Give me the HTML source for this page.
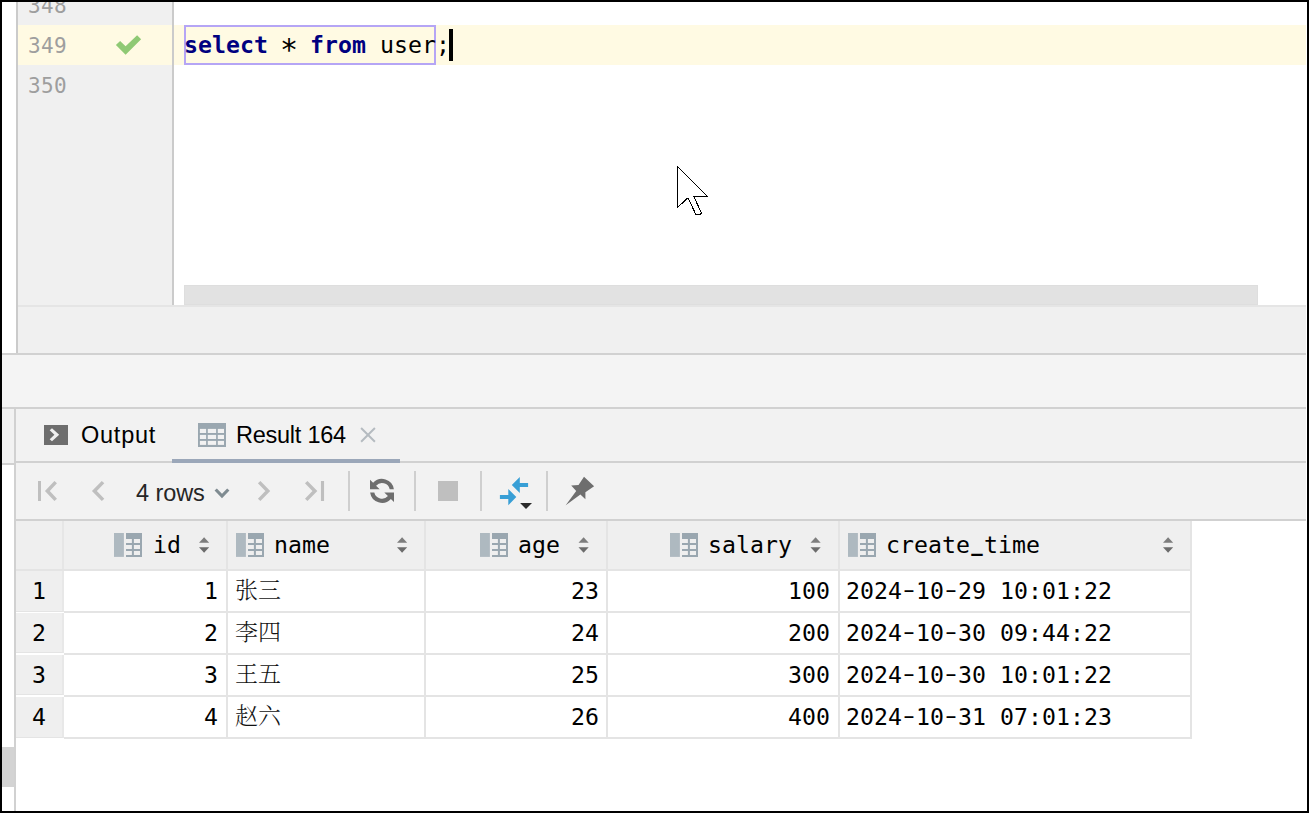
<!DOCTYPE html>
<html lang="zh">
<head>
<meta charset="utf-8">
<title>select * from user</title>
<style>
html,body{margin:0;padding:0;}
body{width:1309px;height:813px;position:relative;overflow:hidden;background:#fff;
  font-family:"Liberation Sans","Noto Sans CJK SC",sans-serif;}
.a{position:absolute;}
.mono{font-family:"DejaVu Sans Mono","Liberation Mono","Noto Sans CJK SC",monospace;}
.code{font-size:23.2px;line-height:40px;white-space:pre;color:#000;letter-spacing:0.034px;}
.star{display:inline-block;width:14px;font-size:30px;line-height:0;text-indent:-2px;position:relative;top:7px;letter-spacing:0;}
.ln{font-size:21px;line-height:40px;color:#9e9e9e;left:28px;white-space:pre;letter-spacing:0.3px;}
.kw{color:#000080;font-weight:bold;}
.ui{font-size:23.5px;line-height:30px;color:#000;white-space:pre;}
.sep{width:2px;height:40px;top:471px;background:#cfcfcf;}
.hl{background:#d1d1d1;}
.th{font-size:23.2px;line-height:48px;top:521px;white-space:pre;color:#000;letter-spacing:0.034px;}
.td{font-size:23.2px;line-height:40px;white-space:pre;color:#000;letter-spacing:0.034px;}
.num{text-align:right;}
.hy{display:inline-block;transform:translateY(-2px) scaleX(1.5);}
.us{display:inline-block;font-weight:bold;transform:translateY(-2.5px) scaleX(0.82);}
.cjk{font-family:"Liberation Serif","Noto Serif CJK SC",serif;font-size:23px;font-weight:300;color:#111;}
.vline{width:2px;top:521px;height:218px;background:#e4e4e4;}
.rowline{left:64px;width:1128px;height:2px;background:#e4e4e4;}
.rh{left:16px;width:46px;height:39px;background:#efefef;border-right:2px solid #e8e8e8;border-bottom:1px solid #e4e4e4;}
.rn{left:16px;width:46px;text-align:center;}
</style>
</head>
<body>

<!-- ===== editor ===== -->
<div class="a" style="left:16px;top:2px;width:2px;height:351px;background:#cbcbcb"></div>
<div class="a" style="left:18px;top:2px;width:154px;height:303px;background:#f0f0f0"></div>
<div class="a" style="left:18px;top:25px;width:1289px;height:40px;background:#fffae3"></div>
<div class="a" style="left:172px;top:2px;width:2px;height:303px;background:#cbcbcb"></div>

<div class="a mono ln" style="top:-14px">348</div>
<div class="a mono ln" style="top:26px">349</div>
<div class="a mono ln" style="top:66px">350</div>

<!-- check mark -->
<svg class="a" style="left:108px;top:28px" width="42" height="34" viewBox="108 28 42 34">
  <path d="M115.9 44.95 L120.1 40.9 L125.6 46.2 L137.1 35.3 L141.1 39.3 L125.6 54.8 Z" fill="#8fc974"/>
</svg>

<!-- statement frame -->
<div class="a" style="left:184px;top:25px;width:248px;height:36px;border:2px solid #b5a5f5"></div>
<div class="a mono code" style="left:184px;top:25px"><span class="kw">select</span> <span class="star">*</span> <span class="kw">from</span> user;</div>
<div class="a" style="left:449px;top:29px;width:4px;height:32px;background:#000"></div>

<!-- mouse cursor -->
<svg class="a" style="left:670px;top:160px" width="46" height="62" viewBox="670 160 46 62">
  <path d="M677.5 166.5 L707.5 196.5 L693.8 196.5 L701.5 213 L700 214.8 L696 214.8 L688 197.8 L677.5 207.5 Z" fill="#fff" stroke="#000" stroke-width="1" stroke-linejoin="miter" shape-rendering="crispEdges"/>
</svg>

<!-- horizontal scrollbar -->
<div class="a" style="left:184px;top:285px;width:1074px;height:20px;background:#e2e2e2;box-shadow:inset 0 0 0 1px #dedede"></div>
<div class="a" style="left:18px;top:305px;width:1289px;height:2px;background:#e5e5e5"></div>
<div class="a" style="left:18px;top:307px;width:1289px;height:46px;background:#f0f0f0"></div>

<!-- ===== splitter / tool window ===== -->
<div class="a hl" style="left:2px;top:353px;width:1305px;height:2px"></div>
<div class="a" style="left:2px;top:355px;width:1305px;height:52px;background:#f4f4f4"></div>
<div class="a hl" style="left:2px;top:407px;width:1305px;height:2px"></div>
<div class="a" style="left:2px;top:409px;width:1305px;height:110px;background:#f2f2f2"></div>
<div class="a hl" style="left:16px;top:461px;width:1291px;height:2px"></div>
<div class="a hl" style="left:2px;top:463px;width:12px;height:2px"></div>
<div class="a" style="left:2px;top:465px;width:12px;height:346px;background:#fff"></div>
<div class="a hl" style="left:14px;top:409px;width:2px;height:402px"></div>
<div class="a" style="left:2px;top:747px;width:12px;height:40px;background:#d3d3d3"></div>

<!-- tabs -->
<svg class="a" style="left:44px;top:425px" width="24" height="20" viewBox="0 0 24 20">
  <rect width="24" height="20" fill="#6e6e6e"/>
  <path d="M8 3.3 L15.2 9.8 L8 16.3 L5.7 14.2 L10.4 9.8 L5.7 5.3 Z" fill="#f0f0f0"/>
</svg>
<div class="a ui" style="left:81px;top:420px;letter-spacing:0.75px">Output</div>

<svg class="a" style="left:198px;top:423px" width="28" height="24" viewBox="0 0 28 24">
  <rect width="28" height="24" fill="#9aa7b0"/>
  <g fill="#f2f2f2">
    <rect x="1.9" y="5.9" width="6.2" height="4.1"/><rect x="9.8" y="5.9" width="8.3" height="4.1"/><rect x="19.8" y="5.9" width="6.2" height="4.1"/>
    <rect x="1.9" y="11.9" width="6.2" height="4.1"/><rect x="9.8" y="11.9" width="8.3" height="4.1"/><rect x="19.8" y="11.9" width="6.2" height="4.1"/>
    <rect x="1.9" y="17.9" width="6.2" height="4"/><rect x="9.8" y="17.9" width="8.3" height="4"/><rect x="19.8" y="17.9" width="6.2" height="4"/>
  </g>
</svg>
<div class="a ui" style="left:236px;top:420px;letter-spacing:-0.25px">Result 164</div>
<svg class="a" style="left:358px;top:425px" width="20" height="20" viewBox="0 0 20 20">
  <path d="M3.1 3 L16.9 16.7 M16.9 3 L3.1 16.7" fill="none" stroke="#b5bbc0" stroke-width="2"/>
</svg>
<div class="a" style="left:172px;top:459px;width:228px;height:4px;background:#9ba7b9"></div>

<!-- toolbar -->
<svg class="a" style="left:30px;top:471px" width="580" height="44" viewBox="30 471 580 44">
  <g fill="none" stroke="#bfbfbf" stroke-width="3.5">
    <path d="M39.5 481 V501" stroke-width="3"/>
    <path d="M55.7 482.1 L47.35 491 L55.7 499.9"/>
    <path d="M103.05 482.1 L94.4 491 L103.05 499.9"/>
    <path d="M259.17 482.1 L267.8 491 L259.17 499.9"/>
    <path d="M306.23 482.1 L314.87 491 L306.23 499.9"/>
    <path d="M322.5 481 V501" stroke-width="3.1"/>
  </g>
  <path d="M215.7 489.5 L222 496 L228.3 489.5" fill="none" stroke="#7f8b91" stroke-width="3.2"/>
  <!-- refresh -->
  <g fill="#6e6e6e">
    <path d="M370 489.2 V479.8 L373.12 482.83 A12 12 0 0 1 393.88 489.2 H389.7 A7.9 7.9 0 0 0 376.07 485.68 L379.7 489.2 Z"/>
    <path d="M394 492.6 V502 L390.88 498.97 A12 12 0 0 1 370.12 492.6 H374.3 A7.9 7.9 0 0 0 387.93 496.12 L384.3 492.6 Z"/>
  </g>
  <!-- stop -->
  <rect x="438" y="481" width="20" height="20" fill="#bfbfbf"/>
  <!-- compare -->
  <g fill="#389fd6">
    <path d="M511.8 485 L519.8 476.9 V483.1 H528.1 V487 H519.8 V493.1 Z"/>
    <path d="M516.3 497.1 L508.3 489.1 V495.1 H499.9 V499 H508.3 V505.2 Z"/>
  </g>
  <path d="M520.1 503 H532 L526 509 Z" fill="#2b2b2b"/>
  <!-- pin -->
  <path d="M584 476.7 L594.1 486.3 L585.4 492.3 L585.4 499.2 L580.4 494.6 L565.7 505.2 L576.2 490.9 L571.2 485.4 L578.5 485 Z" fill="#6e6e6e"/>
</svg>
<div class="a ui" style="left:136px;top:478px;color:#262626;letter-spacing:-0.07px">4 rows</div>
<div class="a sep" style="left:348px"></div>
<div class="a sep" style="left:414px"></div>
<div class="a sep" style="left:480px"></div>
<div class="a sep" style="left:546px"></div>

<!-- ===== result grid ===== -->
<div class="a hl" style="left:16px;top:519px;width:1291px;height:2px"></div>
<div class="a" style="left:16px;top:521px;width:1291px;height:290px;background:#fff"></div>
<div class="a" style="left:16px;top:521px;width:1176px;height:48px;background:#efefef"></div>
<div class="a" style="left:16px;top:569px;width:1176px;height:2px;background:#e4e4e4"></div>

<div class="a rh" style="top:571px;height:40px"></div>
<div class="a rh" style="top:613px"></div>
<div class="a rh" style="top:655px"></div>
<div class="a rh" style="top:697px;height:40px"></div>
<div class="a rowline" style="top:611px"></div>
<div class="a rowline" style="top:653px"></div>
<div class="a rowline" style="top:695px"></div>
<div class="a rowline" style="top:737px"></div>

<div class="a vline" style="left:62px;height:48px;background:#e6e6e6"></div>
<div class="a vline" style="left:226px"></div>
<div class="a vline" style="left:424px"></div>
<div class="a vline" style="left:606px"></div>
<div class="a vline" style="left:838px"></div>
<div class="a vline" style="left:1190px"></div>

<!-- header icons (column + sort) -->
<svg class="a" style="left:16px;top:521px" width="1176" height="48" viewBox="16 521 1176 48">
  <defs>
    <g id="col">
      <rect x="0" y="0" width="9.9" height="23.9" fill="#aeb9c0"/>
      <path fill="#9aa7b0" fill-rule="evenodd" d="M12 0 H28 V23.9 H12 Z M12 5.9 H17.9 V10 H12 Z M19.9 5.9 H26 V10 H19.9 Z M12 11.9 H17.9 V15.9 H12 Z M19.9 11.9 H26 V15.9 H19.9 Z M12 17.9 H17.9 V22 H12 Z M19.9 17.9 H26 V22 H19.9 Z"/>
    </g>
    <g id="srt">
      <path d="M0 5.5 L5.1 0 L10.2 5.5 Z" fill="#7d7d7d"/>
      <path d="M0 10 L5.1 15.4 L10.2 10 Z" fill="#6c6c6c"/>
    </g>
  </defs>
  <use href="#col" x="114" y="533"/>
  <use href="#col" x="236" y="533"/>
  <use href="#col" x="480" y="533"/>
  <use href="#col" x="670" y="533"/>
  <use href="#col" x="848" y="533"/>
  <use href="#srt" x="199" y="537.3"/>
  <use href="#srt" x="397" y="537.3"/>
  <use href="#srt" x="578.5" y="537.3"/>
  <use href="#srt" x="810.5" y="537.3"/>
  <use href="#srt" x="1163" y="537.3"/>
</svg>

<div class="a mono th" style="left:153px">id</div>
<div class="a mono th" style="left:274px">name</div>
<div class="a mono th" style="left:518px">age</div>
<div class="a mono th" style="left:708px">salary</div>
<div class="a mono th" style="left:886px">create<span class="us">_</span>time</div>

<!-- row numbers -->
<div class="a mono td rn" style="top:571px">1</div>
<div class="a mono td rn" style="top:613px">2</div>
<div class="a mono td rn" style="top:655px">3</div>
<div class="a mono td rn" style="top:697px">4</div>

<!-- id -->
<div class="a mono td num" style="left:64px;width:154px;top:571px">1</div>
<div class="a mono td num" style="left:64px;width:154px;top:613px">2</div>
<div class="a mono td num" style="left:64px;width:154px;top:655px">3</div>
<div class="a mono td num" style="left:64px;width:154px;top:697px">4</div>

<!-- name -->
<div class="a td cjk" style="left:235px;top:571px">张三</div>
<div class="a td cjk" style="left:235px;top:613px">李四</div>
<div class="a td cjk" style="left:235px;top:655px">王五</div>
<div class="a td cjk" style="left:235px;top:697px">赵六</div>

<!-- age -->
<div class="a mono td num" style="left:426px;width:173px;top:571px">23</div>
<div class="a mono td num" style="left:426px;width:173px;top:613px">24</div>
<div class="a mono td num" style="left:426px;width:173px;top:655px">25</div>
<div class="a mono td num" style="left:426px;width:173px;top:697px">26</div>

<!-- salary -->
<div class="a mono td num" style="left:608px;width:222px;top:571px">100</div>
<div class="a mono td num" style="left:608px;width:222px;top:613px">200</div>
<div class="a mono td num" style="left:608px;width:222px;top:655px">300</div>
<div class="a mono td num" style="left:608px;width:222px;top:697px">400</div>

<!-- create_time -->
<div class="a mono td" style="left:846px;top:571px">2024<span class="hy">-</span>10<span class="hy">-</span>29 10:01:22</div>
<div class="a mono td" style="left:846px;top:613px">2024<span class="hy">-</span>10<span class="hy">-</span>30 09:44:22</div>
<div class="a mono td" style="left:846px;top:655px">2024<span class="hy">-</span>10<span class="hy">-</span>30 10:01:22</div>
<div class="a mono td" style="left:846px;top:697px">2024<span class="hy">-</span>10<span class="hy">-</span>31 07:01:23</div>

<!-- window frame -->
<div class="a" style="left:1306px;top:2px;width:1px;height:809px;background:#fff"></div>
<div class="a" style="left:0;top:0;width:1305px;height:809px;border:2px solid #000;pointer-events:none"></div>

</body>
</html>
